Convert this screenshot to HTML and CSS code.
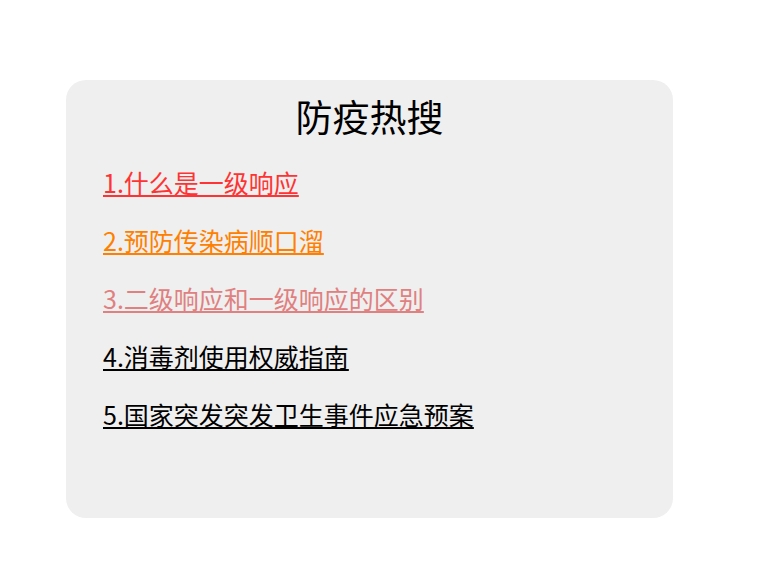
FILE: index.html
```html
<!DOCTYPE html>
<html lang="zh-CN">

<head>
  <meta charset="UTF-8">
  <meta name="viewport" content="width=device-width, initial-scale=1.0">
  <title>防疫热搜</title>

  <link rel="stylesheet" href="styles.css">
</head>

<body>
  <!-- 热搜卡片 -->
  <div class="hot-box">
    <h2 class="hot-title">防疫热搜</h2>
    <ul class="hot-list">
      <li><a href="#" class="hot-1">1.什么是一级响应</a></li>
      <li><a href="#" class="hot-2">2.预防传染病顺口溜</a></li>
      <li><a href="#" class="hot-3">3.二级响应和一级响应的区别</a></li>
      <li><a href="#">4.消毒剂使用权威指南</a></li>
      <li><a href="#">5.国家突发突发卫生事件应急预案</a></li>
    </ul>
  </div>
</body>

</html>
```

FILE: styles.css
```css
body {
  font-family: "Noto Sans CJK SC", "Noto Sans", sans-serif;
  margin: 0;
  padding: 80px 0 0 66px;
}

.hot-box {
  width: 607px;
  height: 438px;
  box-sizing: border-box;
  padding: 10px 37px 0;
  background-color: #efefef;
  border-radius: 20px;
}

.hot-title {
  margin: 0 0 11px;
  font-size: 37px;
  font-weight: normal;
  line-height: 52px;
  text-align: center;
  color: #000;
}

.hot-list {
  list-style: none;
  margin: 0;
  padding: 0;
}

.hot-list li {
  font-size: 25px;
  line-height: 58px;
}

.hot-list a {
  color: #000;
}

.hot-1 {
  color: #ff3333 !important;
}

.hot-2 {
  color: #ff8000 !important;
}

.hot-3 {
  color: #e08080 !important;
}
```
